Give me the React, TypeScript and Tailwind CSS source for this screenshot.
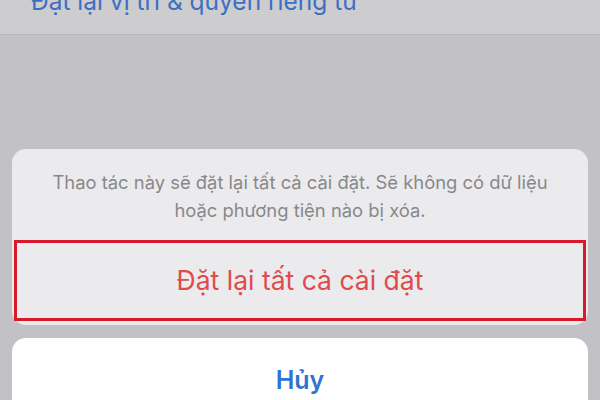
export default function App() {
  return (
    <div
      className="flex h-[400px] w-[600px] flex-col overflow-hidden bg-[#c2c1c6]"
      style={{ fontFamily: 'Inter, "Noto Sans", "Liberation Sans", sans-serif' }}
    >
      {/* Settings row behind the sheet */}
      <div className="h-[35px] shrink-0 overflow-hidden border-b border-[#b9b9bc] bg-[#cdcdcf] pl-[31px]">
        <p className="mt-[-11px] text-[24.5px] leading-[24.5px] text-[#3d6fc2]">
          Đặt lại vị trí &amp; quyền riêng tư
        </p>
      </div>

      <div className="flex flex-1 flex-col px-[12px] pt-[114px]">
        {/* Action sheet */}
        <div className="flex flex-col rounded-[14px] bg-[#ebebed] pb-[4px]">
          <p className="px-[30px] pt-[19px] text-center text-[18.4px] leading-[28px] text-[#88888c]">
            Thao tác này sẽ đặt lại tất cả cài đặt. Sẽ không có dữ liệu
            <br />
            hoặc phương tiện nào bị xóa.
          </p>
          <div className="mx-[2px] mt-[16px] flex h-[81px] items-center justify-center border-[3px] border-[#d8192b]">
            <span className="text-[26.5px] text-[#e04a4d]">Đặt lại tất cả cài đặt</span>
          </div>
        </div>

        {/* Cancel */}
        <div className="mt-[13px] flex h-[90px] justify-center rounded-[14px] bg-white pt-[27px]">
          <span className="text-[25px] font-semibold leading-[30px] text-[#2f73d4]">Hủy</span>
        </div>
      </div>
    </div>
  );
}
